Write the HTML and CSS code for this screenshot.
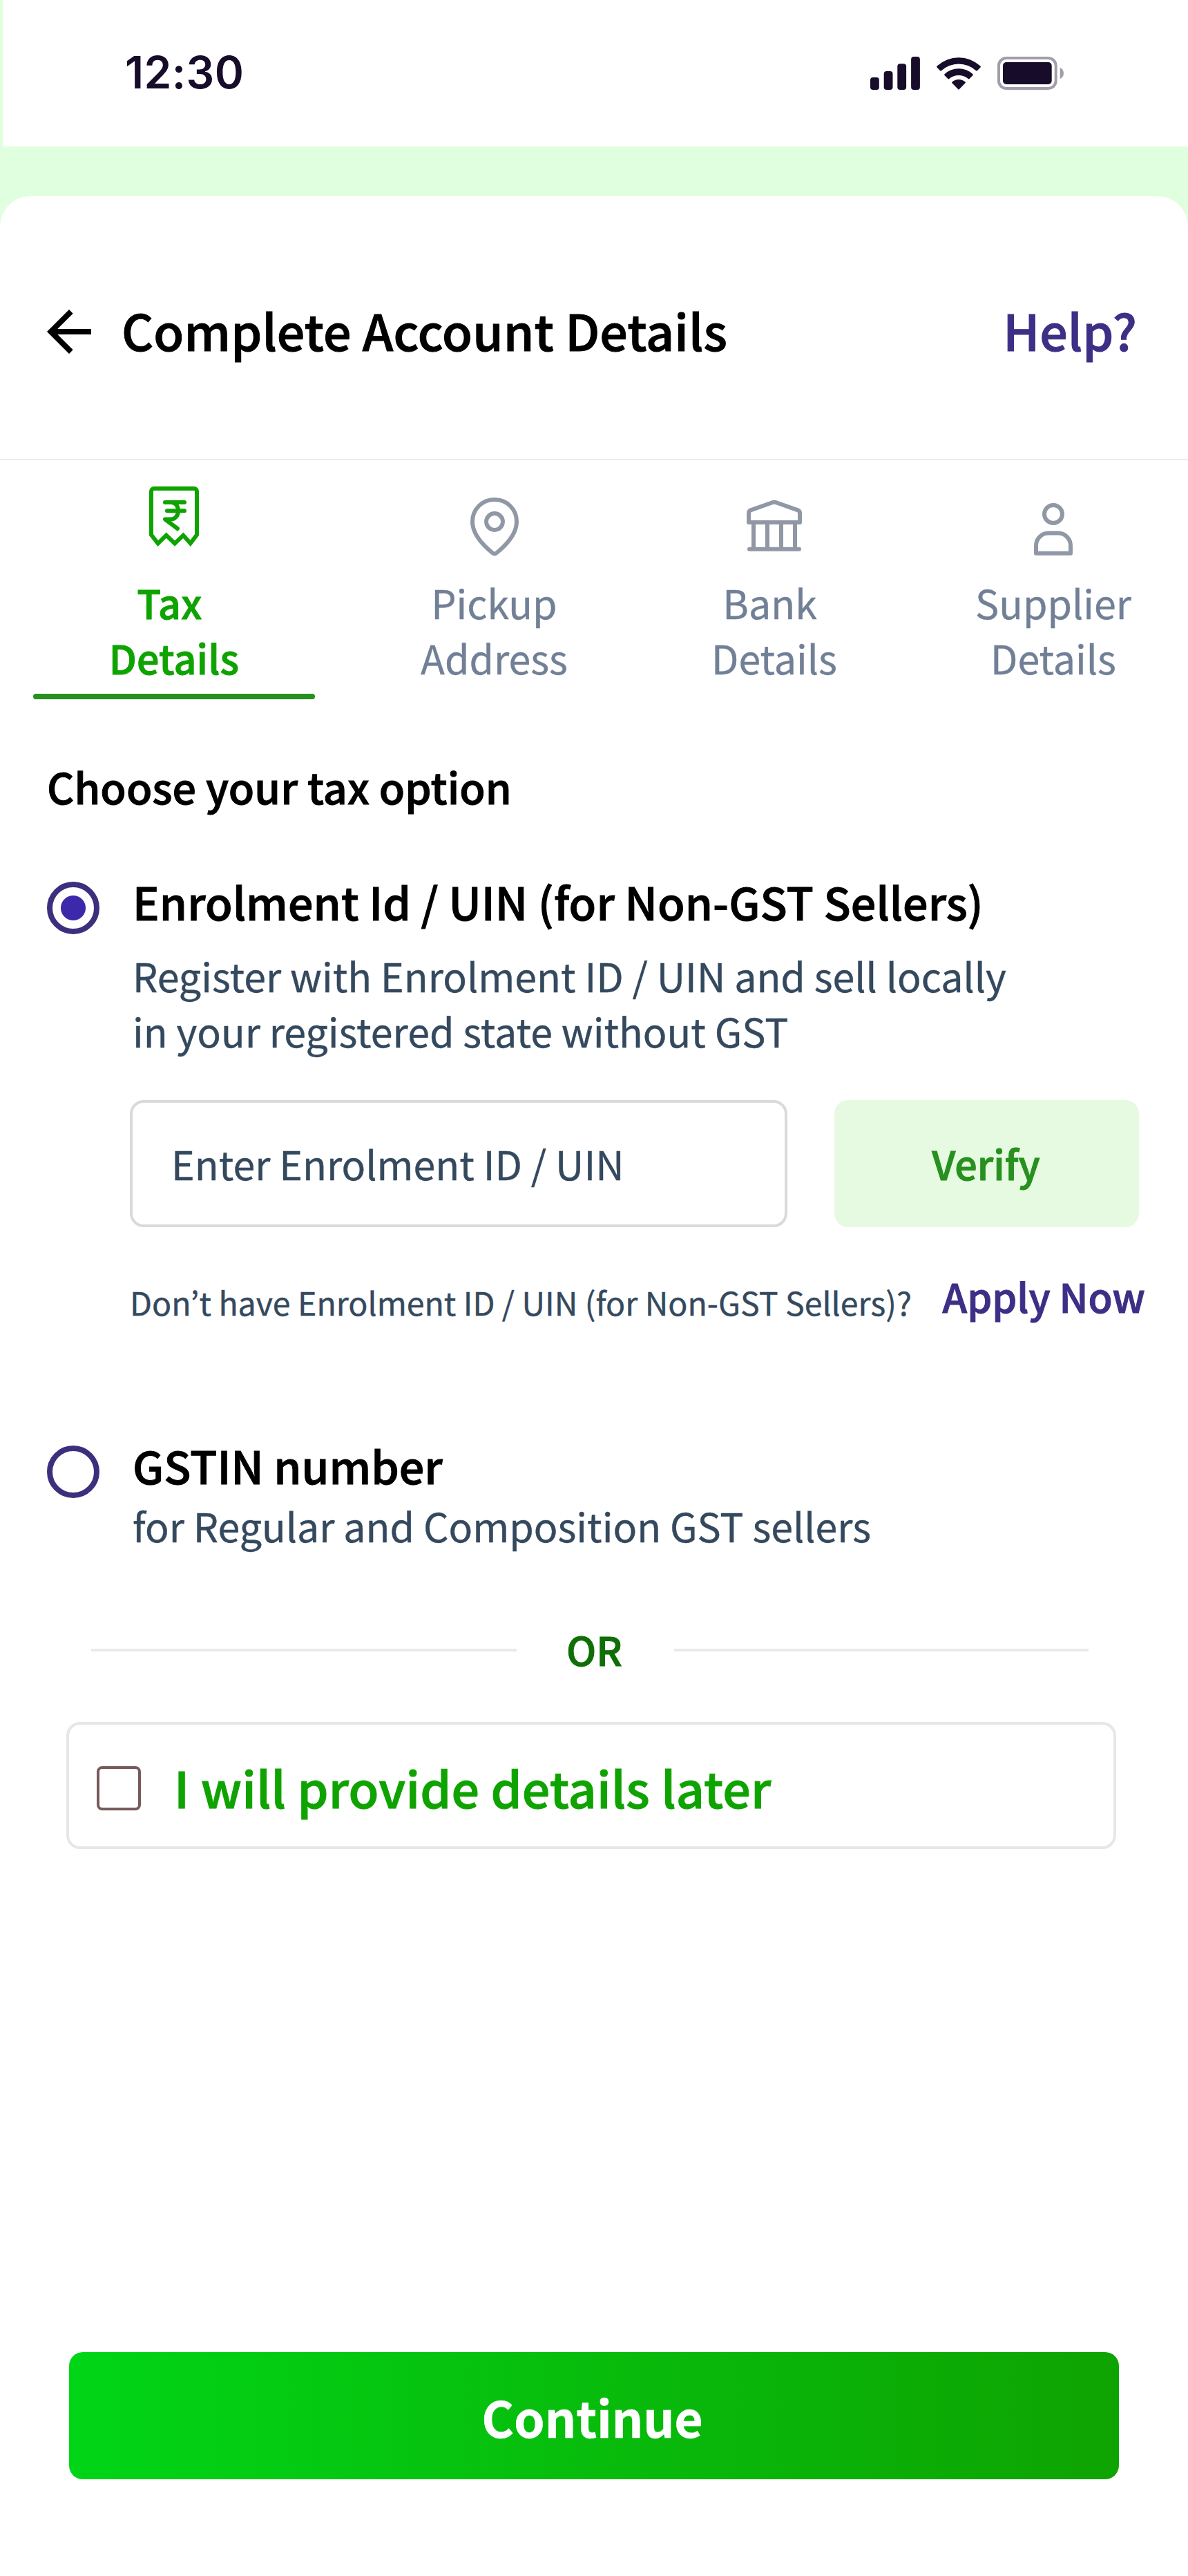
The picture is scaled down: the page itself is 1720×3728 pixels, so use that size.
FILE: index.html
```html
<!DOCTYPE html>
<html lang="en">
<head>
  <meta charset="utf-8">
  <title>Complete Account Details</title>
  <link rel="stylesheet" href="styles.css">
</head>
<body>
  <div class="status-bar">
    <time class="clock">12:30</time>
    <svg class="status-icons" width="300" height="80" viewBox="0 0 300 80" fill="#170c29" aria-hidden="true">
      <rect x="10" y="46" width="12.8" height="18" rx="4"/>
      <rect x="29.7" y="37" width="12.8" height="27" rx="4"/>
      <rect x="49.3" y="26.3" width="12.8" height="37.7" rx="4"/>
      <rect x="69.1" y="16" width="12.8" height="48" rx="4"/>
      <path d="M106.6 29.6A46 46 0 0 1 169.4 29.6Q170.4 30.5 169.5 31.5L164.9 36.2Q164 37 163 36.2A37 37 0 0 0 113 36.2Q112 37 111.1 36.2L106.5 31.5Q105.6 30.5 106.6 29.6z"/>
      <path d="M117.6 41.2A30 30 0 0 1 158.4 41.2Q159.4 42.1 158.5 43L153.6 48Q152.7 48.9 151.7 48A21 21 0 0 0 124.3 48Q123.3 48.9 122.4 48L117.5 43Q116.6 42.1 117.6 41.2z"/>
      <path d="M128.5 52.5A14.5 14.5 0 0 1 147.5 52.5Q148.4 53.4 147.5 54.3L138.7 63.3Q138 64 137.3 63.3L128.5 54.3Q127.6 53.4 128.5 52.5z"/>
      <rect x="196" y="18" width="82.7" height="44" rx="11" fill="none" stroke="#170c29" stroke-opacity=".4" stroke-width="4"/>
      <rect x="202" y="24" width="70.7" height="32" rx="5"/>
      <path d="M284.7 31.7C288 33.2 290 36.3 290 40S288 46.7 284.7 48.2z" fill-opacity=".4"/>
    </svg>
  </div>

  <main class="sheet">
    <header class="header">
      <svg class="back" width="96" height="96" viewBox="0 0 24 24" aria-label="Back"><path d="M20 11H7.83l5.59-5.59L12 4l-8 8 8 8 1.41-1.41L7.83 13H20v-2z"/></svg>
      <h1 class="title">Complete Account Details</h1>
      <a class="help">Help?</a>
    </header>

    <nav class="tabs">
      <div class="tab tab-active">
        <svg class="tab-icon" viewBox="-8 0 120 120" fill="none" stroke="currentColor" stroke-width="6">
          <path d="M19 84V21a4 4 0 0 1 4-4H81a4 4 0 0 1 4 4V84L75.7 96.3 65.3 84.7 53 96.5 40.7 84.7 28.7 96.5z"/>
          <path d="M39 37H67M42 49.3H67M48 37C54.5 37 58 43 58 49.3C58 56 54 61.5 47 61.5H39L57 75" stroke-linecap="round" stroke-linejoin="round"/>
        </svg>
        <span class="tab-label">Tax&nbsp;<br>Details</span>
      </div>
      <div class="tab">
        <svg class="tab-icon" viewBox="0 0 120 120" fill="none" stroke="currentColor" stroke-width="6">
          <path d="M60 33C42 33 28 47 28 65C28 82 42 98 57.5 110.5Q60 112.5 62.5 110.5C78 98 92 82 92 65C92 47 78 33 60 33z"/>
          <circle cx="60" cy="65" r="12"/>
        </svg>
        <span class="tab-label">Pickup<br>Address</span>
      </div>
      <div class="tab">
        <svg class="tab-icon" viewBox="0 0 120 120" fill="none" stroke="currentColor" stroke-width="6" stroke-linejoin="round">
          <path d="M23 66V52.5c0-2 1-3.4 2.8-4.1L56.5 37.5a10 10 0 0 1 7 0L94.2 48.4c1.8.7 2.8 2.1 2.8 4.1V66zM30 66V104M50 66V104M70 66V104M90 66V104"/>
          <path d="M24 104.7H96" stroke-linecap="round"/>
        </svg>
        <span class="tab-label">Bank&nbsp;<br>Details</span>
      </div>
      <div class="tab tab-last">
        <svg class="tab-icon" viewBox="0 0 120 120" fill="none" stroke="currentColor" stroke-width="6" stroke-linejoin="round">
          <circle cx="60" cy="54" r="13"/>
          <path d="M35 110.7V99.5a18 18 0 0 1 18-18H67a18 18 0 0 1 18 18V110.7z"/>
        </svg>
        <span class="tab-label">Supplier<br>Details</span>
      </div>
    </nav>

    <section class="options">
      <h2 class="prompt">Choose your tax option</h2>

      <div class="option">
        <span class="radio radio-checked"></span>
        <div class="option-text">
          <h3 class="option-title">Enrolment Id / UIN (for Non-GST Sellers)</h3>
          <p class="option-note">Register with Enrolment ID / UIN and sell locally<br>in your registered state without GST</p>
        </div>
      </div>
      <div class="verify-row">
        <div class="field">Enter Enrolment ID / UIN</div>
        <div class="verify">Verify</div>
      </div>
      <div class="apply-row">
        <span class="hint">Don’t have Enrolment ID / UIN (for Non-GST Sellers)?</span>
        <a class="apply">Apply Now</a>
      </div>

      <div class="option option-gstin">
        <span class="radio"></span>
        <div class="option-text">
          <h3 class="option-title">GSTIN number</h3>
          <p class="option-note">for Regular and Composition GST sellers</p>
        </div>
      </div>
    </section>

    <div class="divider"><span class="divider-label">OR</span></div>

    <div class="later">
      <span class="checkbox"></span>
      <span class="later-label">I will provide details later</span>
    </div>

    <div class="continue">Continue</div>
  </main>
</body>
</html>
```
FILE: styles.css
```css
* { box-sizing: border-box; }

body {
  margin: 0;
  width: 1720px;
  height: 3728px;
  display: flex;
  flex-direction: column;
  background: #e0ffde;
  color: #000;
  font-family: "Noto Sans CJK JP", "Noto Sans", sans-serif;
  font-weight: 400;
  -webkit-text-stroke: 0.4px;
}

h1, h2, h3, p { margin: 0; font-weight: 500; }

/* Semibold: medium weight, thickened slightly */
.title, .help, .tab-active, .prompt, .option-title,
.verify, .apply, .divider, .later-label {
  font-weight: 500;
  -webkit-text-stroke: 1px;
}

.status-bar {
  height: 212px;
  flex: none;
  margin-left: 4px;
  padding: 0 170px 0 177px;
  display: flex;
  justify-content: space-between;
  background: #fff;
}

.clock {
  font: 600 64px/80px Inter, sans-serif;
  -webkit-text-stroke: 0;
  letter-spacing: 0.4px;
  color: #170c29;
  margin-top: 65px;
}

.status-icons { margin-top: 66px; }

.sheet {
  flex: 1;
  margin-top: 72px;
  display: flex;
  flex-direction: column;
  background: #fff;
  border-radius: 44px 44px 0 0;
}

.header {
  height: 382px;
  flex: none;
  display: flex;
  align-items: center;
  padding: 6px 74px 0 52px;
  border-bottom: 2px solid #e8ebea;
}

.back { margin-top: 6px; }

.title {
  margin-left: 28px;
  font-size: 71.6px;
  line-height: 96px;
  letter-spacing: 0.12px;
}

.help {
  margin-left: auto;
  font-size: 71.6px;
  line-height: 96px;
  color: #3c2f85;
}

.tabs {
  display: grid;
  grid-template-columns: 408px 519px 292px 453px;
  padding: 24px 0 0 48px;
  color: #718096;
}

.tab {
  height: 322px;
  display: flex;
  flex-direction: column;
  align-items: center;
  text-align: center;
}

.tab-last { padding-left: 63px; }

.tab-icon { width: 120px; height: 120px; color: #9098a6; }

.tab-label {
  margin-top: 22px;
  font-size: 57.3px;
  line-height: 80px;
}

.tab-active { color: #0fa302; }
.tab-active .tab-icon { color: #0fa302; }
.tab-active .tab-label { letter-spacing: 0.2px; }

.tab-active::after {
  content: "";
  width: 408px;
  height: 8px;
  margin-top: 12px;
  border-radius: 4px;
  background: #27901f;
}

.options { padding: 86px 70px 0 68px; }

.prompt {
  font-size: 60.9px;
  line-height: 80px;
  letter-spacing: 0.1px;
}

.option {
  display: flex;
  gap: 48px;
  margin-top: 78px;
}

.radio {
  flex: none;
  width: 76px;
  height: 76px;
  margin-top: 20px;
  border: 8px solid #3d2f7d;
  border-radius: 50%;
}

.radio-checked {
  background: radial-gradient(circle, #3b28ab 17.5px, transparent 18.5px);
}

.option-title {
  font-size: 64.5px;
  line-height: 96px;
  letter-spacing: 0.1px;
}

.option-note {
  margin-top: 20px;
  font-size: 57.3px;
  line-height: 80px;
  font-weight: 400;
  color: #34495e;
}

.verify-row {
  display: flex;
  gap: 68px;
  margin: 60px 0 0 120px;
}

.field {
  width: 952px;
  height: 184px;
  padding-left: 56px;
  border: 4px solid #dadada;
  border-radius: 20px;
  font-size: 57.3px;
  line-height: 175px;
  color: #34495e;
}

.verify {
  width: 441px;
  height: 184px;
  border-radius: 20px;
  background: #e5fae0;
  color: #27901f;
  font-size: 57.3px;
  line-height: 183px;
  text-align: center;
  padding-right: 2px;
}

.apply-row {
  display: flex;
  justify-content: space-between;
  margin: 60px -10px 0 120px;
  white-space: nowrap;
}

.hint {
  margin-top: 8px;
  font-size: 46.5px;
  line-height: 80px;
  color: #34495e;
}

.apply {
  width: 295.5px;
  font-size: 57.3px;
  line-height: 80px;
  color: #3c2f85;
}

.option-gstin { margin-top: 148px; }
.option-gstin .option-title { letter-spacing: 0; }
.option-gstin .option-note { margin-top: 0; }

.divider {
  display: grid;
  grid-template-columns: 616px 1fr 600px;
  align-items: center;
  margin: 99px 144px 0 132px;
  font-size: 57.3px;
  line-height: 80px;
  text-align: center;
  color: #0f6e06;
}

.divider-label { padding-right: 3px; }

.divider::before,
.divider::after {
  content: "";
  height: 4px;
  margin-top: 1px;
  background: #e6ebea;
}

.later {
  height: 184px;
  margin: 65px 104px 0 96px;
  padding-left: 40px;
  display: flex;
  align-items: center;
  border: 4px solid #e7e7e7;
  border-radius: 20px;
}

.checkbox {
  width: 64px;
  height: 64px;
  margin-top: 8px;
  border: 4px solid #775a5c;
  border-radius: 8px;
}

.later-label {
  margin: 3px 0 0 48px;
  font-size: 71.6px;
  line-height: 96px;
  letter-spacing: 0.2px;
  color: #0fa302;
}

.continue {
  height: 184px;
  margin: auto 100px 140px;
  padding: 1px 5px 0 0;
  border-radius: 20px;
  background: linear-gradient(90deg, #01d517, #0ea301);
  color: #fff;
  font-size: 71.6px;
  line-height: 184px;
  font-weight: 700;
  letter-spacing: -0.3px;
  text-align: center;
}
```
